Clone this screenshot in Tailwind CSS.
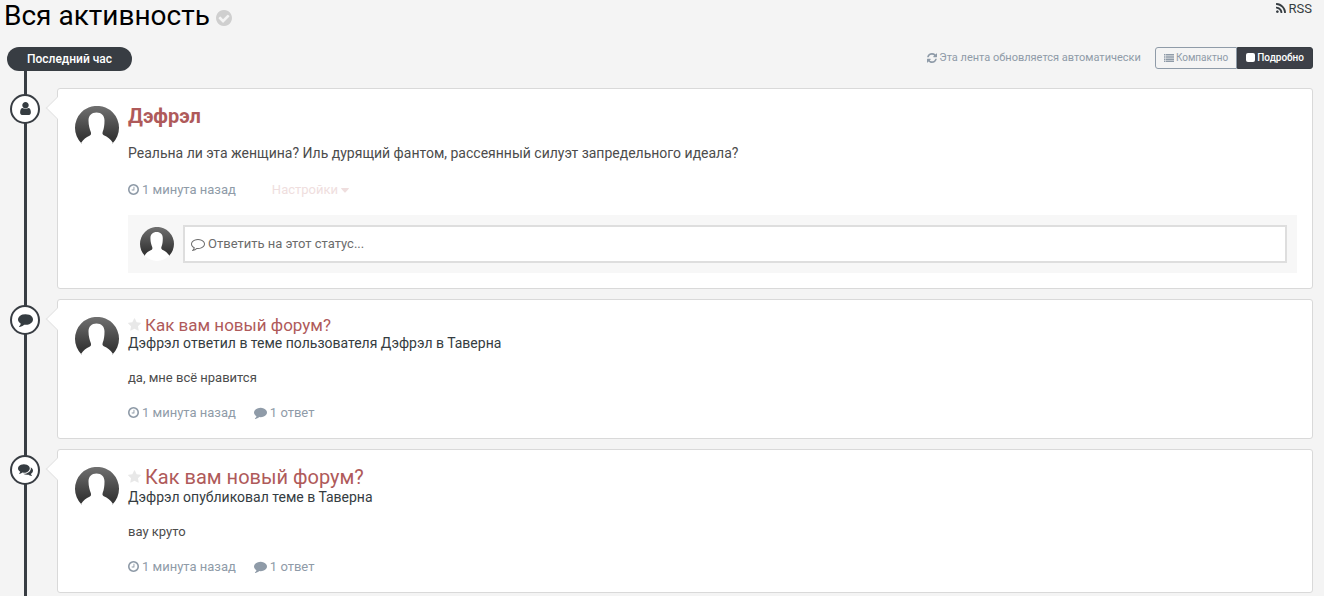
<!DOCTYPE html>
<html lang="ru">
<head>
    <meta charset="UTF-8">
    <meta name="viewport" content="width=device-width, initial-scale=1.0">
    <title>Вся активность</title>
    <script src="https://cdn.jsdelivr.net/npm/@tailwindcss/browser@4"></script>
</head>
<body class="bg-[#f4f4f4] font-['Roboto',sans-serif] text-[13px] text-[#353c41]">

    <!-- icons -->
    <svg class="absolute size-0" aria-hidden="true">
        <symbol id="user" viewBox="256 0 1280 1792"><path d="M1536 1399q0 109-62.5 187t-150.5 78h-854q-88 0-150.5-78t-62.5-187q0-85 8.5-160.5t31.5-152 58.5-131 94-89 134.5-34.5q131 128 313 128t313-128q76 0 134.5 34.5t94 89 58.5 131 31.5 152 8.5 160.5zm-256-887q0 159-112.5 271.5t-271.5 112.5-271.5-112.5-112.5-271.5 112.5-271.5 271.5-112.5 271.5 112.5 112.5 271.5z"/></symbol>
        <symbol id="comment" viewBox="0 0 1792 1792"><path d="M1792 896q0 174-120 321.5t-326 233-450 85.5q-70 0-145-8-198 175-460 242-49 14-114 22-17 2-30.5-9t-17.5-29v-1q-3-4-.5-12t2-10 4.500-9.500l6-9 7-8.500 8-9q7-8 31-34.500t34.500-38 31-39.500 32.500-51 27-59 26-76q-157-89-247.500-220t-90.500-281q0-130 71-248.500t191-204.500 286-136.500 348-50.500q244 0 450 85.500t326 233 120 321.500z"/></symbol>
        <symbol id="comments" viewBox="0 0 1792 1792"><path d="M1408 768q0 139-94 257t-256.5 186.5-353.5 68.5q-86 0-176-16-124 88-278 128-36 9-86 16h-3q-11 0-20.5-8t-11.5-21q-1-3-1-6.5t.5-6.5 2-6l2.5-5 3.5-5.5 4-5 4.5-5 4-4.5q5-6 23-25t26-29.5 22.5-29 25-38.5 20.5-44q-124-72-195-177t-71-224q0-139 94-257t256.5-186.5 353.5-68.5 353.5 68.5 256.5 186.5 94 257zm384 256q0 120-71 224.5t-195 176.5q10 24 20.5 44t25 38.5 22.5 29 26 29.5 23 25q1 1 4 4.5t4.5 5 4 5 3.5 5.5l2.5 5 2 6 .5 6.5-1 6.5q-3 14-13 22t-22 7q-50-7-86-16-154-40-278-128-90 16-176 16-271 0-472-132 58 4 88 4 161 0 309-45t264-129q125-92 192-212t67-254q0-77-23-152 129 71 204 178t75 230z"/></symbol>
        <symbol id="comment-o" viewBox="0 0 1792 1792"><path d="M896 384q-204 0-381.5 69.5t-282 187.5-104.5 255q0 112 71.5 213.5t201.5 175.5l87 50-27 96q-24 91-70 172 152-63 275-171l43-38 57 6q69 8 130 8 204 0 381.5-69.5t282-187.5 104.5-255-104.5-255-282-187.5-381.5-69.5zm896 512q0 174-120 321.5t-326 233-450 85.5q-70 0-145-8-198 175-460 242-49 14-114 22h-5q-15 0-27-10.5t-16-27.5v-1q-3-4-.5-12t2-10 4.500-9.500l6-9 7-8.500 8-9q7-8 31-34.500t34.500-38 31-39.500 32.500-51 27-59 26-76q-157-89-247.500-220t-90.500-281q0-174 120-321.500t326-233 450-85.500 450 85.500 326 233 120 321.500z"/></symbol>
        <symbol id="clock" viewBox="128 128 1536 1536"><path d="M1024 544v448q0 14-9 23t-23 9h-320q-14 0-23-9t-9-23v-64q0-14 9-23t23-9h224v-352q0-14 9-23t23-9h64q14 0 23 9t9 23zm416 352q0-148-73-273t-198-198-273-73-273 73-198 198-73 273 73 273 198 198 273 73 273-73 198-198 73-273zm224 0q0 209-103 385.5t-279.5 279.5-385.5 103-385.5-103-279.5-279.5-103-385.5 103-385.5 279.5-279.5 385.5-103 385.5 103 279.5 279.5 103 385.5z"/></symbol>
        <symbol id="star" viewBox="64 0 1664 1792"><path d="M1728 647q0 22-26 48l-363 354 86 500q1 7 1 20 0 21-10.5 35.5t-30.5 14.5q-19 0-40-12l-449-236-449 236q-22 12-40 12-21 0-31.5-14.5t-10.5-35.5q0-6 2-20l86-500-364-354q-25-27-25-48 0-37 56-46l502-73 225-455q19-41 49-41t49 41l225 455 502 73q56 9 56 46z"/></symbol>
        <symbol id="check" viewBox="128 128 1536 1536"><path d="M1412 734q0-28-18-46l-91-90q-19-19-45-19t-45 19l-408 407-226-226q-19-19-45-19t-45 19l-91 90q-18 18-18 46 0 27 18 45l362 362q19 19 45 19 27 0 46-19l543-543q18-18 18-45zm252 162q0 209-103 385.5t-279.5 279.5-385.5 103-385.5-103-279.5-279.5-103-385.5 103-385.5 279.5-279.5 385.5-103 385.5 103 279.5 279.5 103 385.5z"/></symbol>
        <symbol id="rss" viewBox="192 128 1408 1408"><path d="M576 1344q0 80-56 136t-136 56-136-56-56-136 56-136 136-56 136 56 56 136zm512 123q2 28-17 48-18 21-47 21h-135q-25 0-43-16.5t-20-41.5q-22-229-184.5-391.5t-391.5-184.5q-25-2-41.5-20t-16.5-43v-135q0-29 21-47 17-17 43-17h5q160 13 306 80.5t259 181.5q114 113 181.5 259t80.5 306zm512 2q2 27-18 47-18 20-46 20h-143q-26 0-44.5-17.5t-19.5-42.5q-12-215-101-408.5t-231.5-336-336-231.5-408.5-102q-25-1-42.5-19.5t-17.5-43.5v-143q0-28 20-46 18-18 44-18h3q262 13 501.5 120t425.5 294q187 186 294 425.5t120 501.5z"/></symbol>
        <symbol id="refresh" viewBox="128 128 1536 1536"><path d="M1639 1056q0 5-1 7-64 268-268 434.5t-478 166.5q-146 0-282.5-55t-243.5-157l-129 129q-19 19-45 19t-45-19-19-45v-448q0-26 19-45t45-19h448q26 0 45 19t19 45-19 45l-137 137q71 66 161 102t187 36q134 0 250-65t186-179q11-17 53-117 8-23 30-23h192q13 0 22.5 9.5t9.5 22.5zm25-800v448q0 26-19 45t-45 19h-448q-26 0-45-19t-19-45 19-45l138-138q-148-137-349-137-134 0-250 65t-186 179q-11 17-53 117-8 23-30 23h-199q-13 0-22.5-9.5t-9.5-22.5v-7q65-268 270-434.5t480-166.5q146 0 284 55.5t245 156.5l130-129q19-19 45-19t45 19 19 45z"/></symbol>
        <symbol id="list" viewBox="0 0 10 8"><path d="M0 0h1.500v1.500H0zM2 0h8v1.500H2zM0 2.200h1.500v1.500H0zM2 2.200h8v1.500H2zM0 4.400h1.500v1.500H0zM2 4.400h8v1.500H2zM0 6.500h1.500v1.500H0zM2 6.500h8v1.500H2z"/></symbol>
        <symbol id="caret" viewBox="0 0 8 5"><path d="M.5 0h7q.7.2.3.8L4.4 4.4q-.4.4-.8 0L.2.8Q-.2.2.5 0z"/></symbol>
        <linearGradient id="shade" x1="0" y1="0" x2="0" y2="1">
            <stop offset="0" stop-color="#707070"/>
            <stop offset="0.85" stop-color="#363636"/>
        </linearGradient>
        <symbol id="avatar" viewBox="0 0 44 44">
            <path fill="url(#shade)" d="M6.500 37.500A22 22 0 1 1 37.500 37.500z"/>
            <path fill="#fff" d="M21.500 6.500c-5 0-8 3-8 8 0 5 1.200 8.500 2.300 11.500.5 1.800.3 2.800-1.300 3.800C11 31.500 8.500 33 6 37A22 22 0 0 0 38 37C35.500 33 32.500 31 28.800 29.300c-1.600-.8-1.500-2-1-3.800C29 22.500 29.500 19 29.500 14.500c0-5-3-8-8-8z"/>
        </symbol>
    </svg>

    <header class="flex items-start justify-between pl-1 pr-3">
        <h1 class="flex items-center gap-[6px] text-[28px] leading-8 text-black">
            Вся активность
            <svg class="size-4 mt-1 fill-[#cfcfcf]"><use href="#check"/></svg>
        </h1>
        <a href="#" class="flex items-center gap-[3px] leading-[18px]">
            <svg class="mb-[2px] size-[10px] fill-current"><use href="#rss"/></svg>RSS
        </a>
    </header>

    <main class="relative pt-[15px] pl-[7px] pr-[11px] pb-[3px]">
        <div class="absolute top-[15px] bottom-0 left-6 w-[3px] bg-[#383d43]"></div>

        <div class="flex items-start justify-between mb-[17px]">
            <h2 class="relative w-[125px] rounded-full bg-[#383d43] text-center text-xs leading-6 font-medium text-white">Последний час</h2>
            <div class="flex items-center gap-[14px]">
                <span class="flex items-center gap-[2px] text-[11px] text-[#8f9ba8]">
                    <svg class="size-[10px] fill-current"><use href="#refresh"/></svg>Эта лента обновляется автоматически
                </span>
                <div class="flex text-[10px] leading-5">
                    <button class="flex items-center gap-[2px] rounded-l-[3px] border border-[#8f9ba8] px-2 text-[#8f9ba8]">
                        <svg class="mb-px h-2 w-[10px] fill-current"><use href="#list"/></svg>Компактно
                    </button>
                    <button class="flex items-center gap-[2px] rounded-r-[3px] border border-[#383d43] bg-[#3d4048] px-2 font-medium text-white">
                        <span class="mb-px size-[9px] rounded-[2px] bg-white"></span>Подробно
                    </button>
                </div>
            </div>
        </div>

        <ol class="flex flex-col gap-[10px]">
            <li class="flex items-start gap-[17px] pl-[3px]">
                <span class="relative mt-[6px] flex size-[30px] shrink-0 items-center justify-center rounded-full border-2 border-[#383d43] bg-white">
                    <svg class="mb-[2px] h-[15px] w-[11px] fill-[#353c41]"><use href="#user"/></svg>
                </span>
                <article class="relative flex grow gap-[9px] rounded-[3px] border border-[#d9d9d9] bg-white pt-4 pr-[15px] pb-[15px] pl-[17px]">
                    <span class="absolute top-[11px] -left-[9px] size-4 rotate-45 border-b border-l border-[#e4e4e4] bg-white"></span>
                    <svg class="mt-px size-11 shrink-0"><use href="#avatar"/></svg>
                    <div class="grow">
                        <h3 class="text-xl leading-[22px] font-bold"><a href="#" class="text-[#af5a5a]">Дэфрэл</a></h3>
                        <p class="mt-[17px] text-sm leading-[18px] text-[#4c4c4c]">Реальна ли эта женщина? Иль дурящий фантом, рассеянный силуэт запредельного идеала?</p>
                        <div class="mt-[19px] flex gap-9 leading-[18px] text-[#8f9ba8]">
                            <a href="#" class="flex items-center gap-[3px]"><svg class="mb-[2px] size-[11px] fill-current"><use href="#clock"/></svg>1 минута назад</a>
                            <button class="flex items-center gap-[3px] text-[#efdede]">Настройки<svg class="h-[5px] w-2 fill-current"><use href="#caret"/></svg></button>
                        </div>
                        <div class="mt-4 flex items-center gap-[9px] bg-[#f7f7f7] py-[10px] pr-[10px] pl-3">
                            <svg class="size-[34px] shrink-0"><use href="#avatar"/></svg>
                            <label class="flex h-[38px] grow items-center gap-[3px] border-2 border-[#dedede] bg-white px-[6px]">
                                <svg class="size-[14px] shrink-0 fill-[#6c6c6c]"><use href="#comment-o"/></svg>
                                <input type="text" aria-label="Ответить на этот статус" placeholder="Ответить на этот статус..." class="grow outline-none placeholder:text-[#6c6c6c]">
                            </label>
                        </div>
                    </div>
                </article>
            </li>

            <li class="flex items-start gap-[17px] pl-[3px]">
                <span class="relative mt-[6px] flex size-[30px] shrink-0 items-center justify-center rounded-full border-2 border-[#383d43] bg-white">
                    <svg class="mb-[2px] size-[15px] fill-[#353c41]"><use href="#comment"/></svg>
                </span>
                <article class="relative flex grow gap-[9px] rounded-[3px] border border-[#d9d9d9] bg-white py-4 pr-[15px] pl-[17px]">
                    <span class="absolute top-[11px] -left-[9px] size-4 rotate-45 border-b border-l border-[#e4e4e4] bg-white"></span>
                    <svg class="mt-px size-11 shrink-0"><use href="#avatar"/></svg>
                    <div class="grow">
                        <h3 class="flex items-center gap-1 text-[17px] leading-[18px]">
                            <svg class="h-[14px] w-[13px] fill-[#e8e8e8]"><use href="#star"/></svg><a href="#" class="text-[#af5a5a]">Как вам новый форум?</a>
                        </h3>
                        <p class="text-sm leading-[18px]">Дэфрэл ответил в теме пользователя Дэфрэл в Таверна</p>
                        <p class="mt-[17px] leading-[18px] text-[#4c4c4c]">да, мне всё нравится</p>
                        <div class="mt-[17px] flex gap-[18px] leading-[18px] text-[#8f9ba8]">
                            <a href="#" class="flex items-center gap-[3px]"><svg class="mb-[2px] size-[11px] fill-current"><use href="#clock"/></svg>1 минута назад</a>
                            <a href="#" class="flex items-center gap-[3px]"><svg class="mb-[2px] size-[13px] fill-current"><use href="#comment"/></svg>1 ответ</a>
                        </div>
                    </div>
                </article>
            </li>

            <li class="flex items-start gap-[17px] pl-[3px]">
                <span class="relative mt-[6px] flex size-[30px] shrink-0 items-center justify-center rounded-full border-2 border-[#383d43] bg-white">
                    <svg class="mb-[2px] size-[15px] fill-[#353c41]"><use href="#comments"/></svg>
                </span>
                <article class="relative flex grow gap-[9px] rounded-[3px] border border-[#d9d9d9] bg-white py-4 pr-[15px] pl-[17px]">
                    <span class="absolute top-[11px] -left-[9px] size-4 rotate-45 border-b border-l border-[#e4e4e4] bg-white"></span>
                    <svg class="mt-px size-11 shrink-0"><use href="#avatar"/></svg>
                    <div class="grow">
                        <h3 class="flex items-center gap-1 text-xl leading-[22px]">
                            <svg class="h-[14px] w-[13px] fill-[#e8e8e8]"><use href="#star"/></svg><a href="#" class="text-[#af5a5a]">Как вам новый форум?</a>
                        </h3>
                        <p class="text-sm leading-[18px]">Дэфрэл опубликовал теме в Таверна</p>
                        <p class="mt-[17px] leading-[18px] text-[#4c4c4c]">вау круто</p>
                        <div class="mt-[17px] flex gap-[18px] leading-[18px] text-[#8f9ba8]">
                            <a href="#" class="flex items-center gap-[3px]"><svg class="mb-[2px] size-[11px] fill-current"><use href="#clock"/></svg>1 минута назад</a>
                            <a href="#" class="flex items-center gap-[3px]"><svg class="mb-[2px] size-[13px] fill-current"><use href="#comment"/></svg>1 ответ</a>
                        </div>
                    </div>
                </article>
            </li>
        </ol>
    </main>
</body>
</html>
